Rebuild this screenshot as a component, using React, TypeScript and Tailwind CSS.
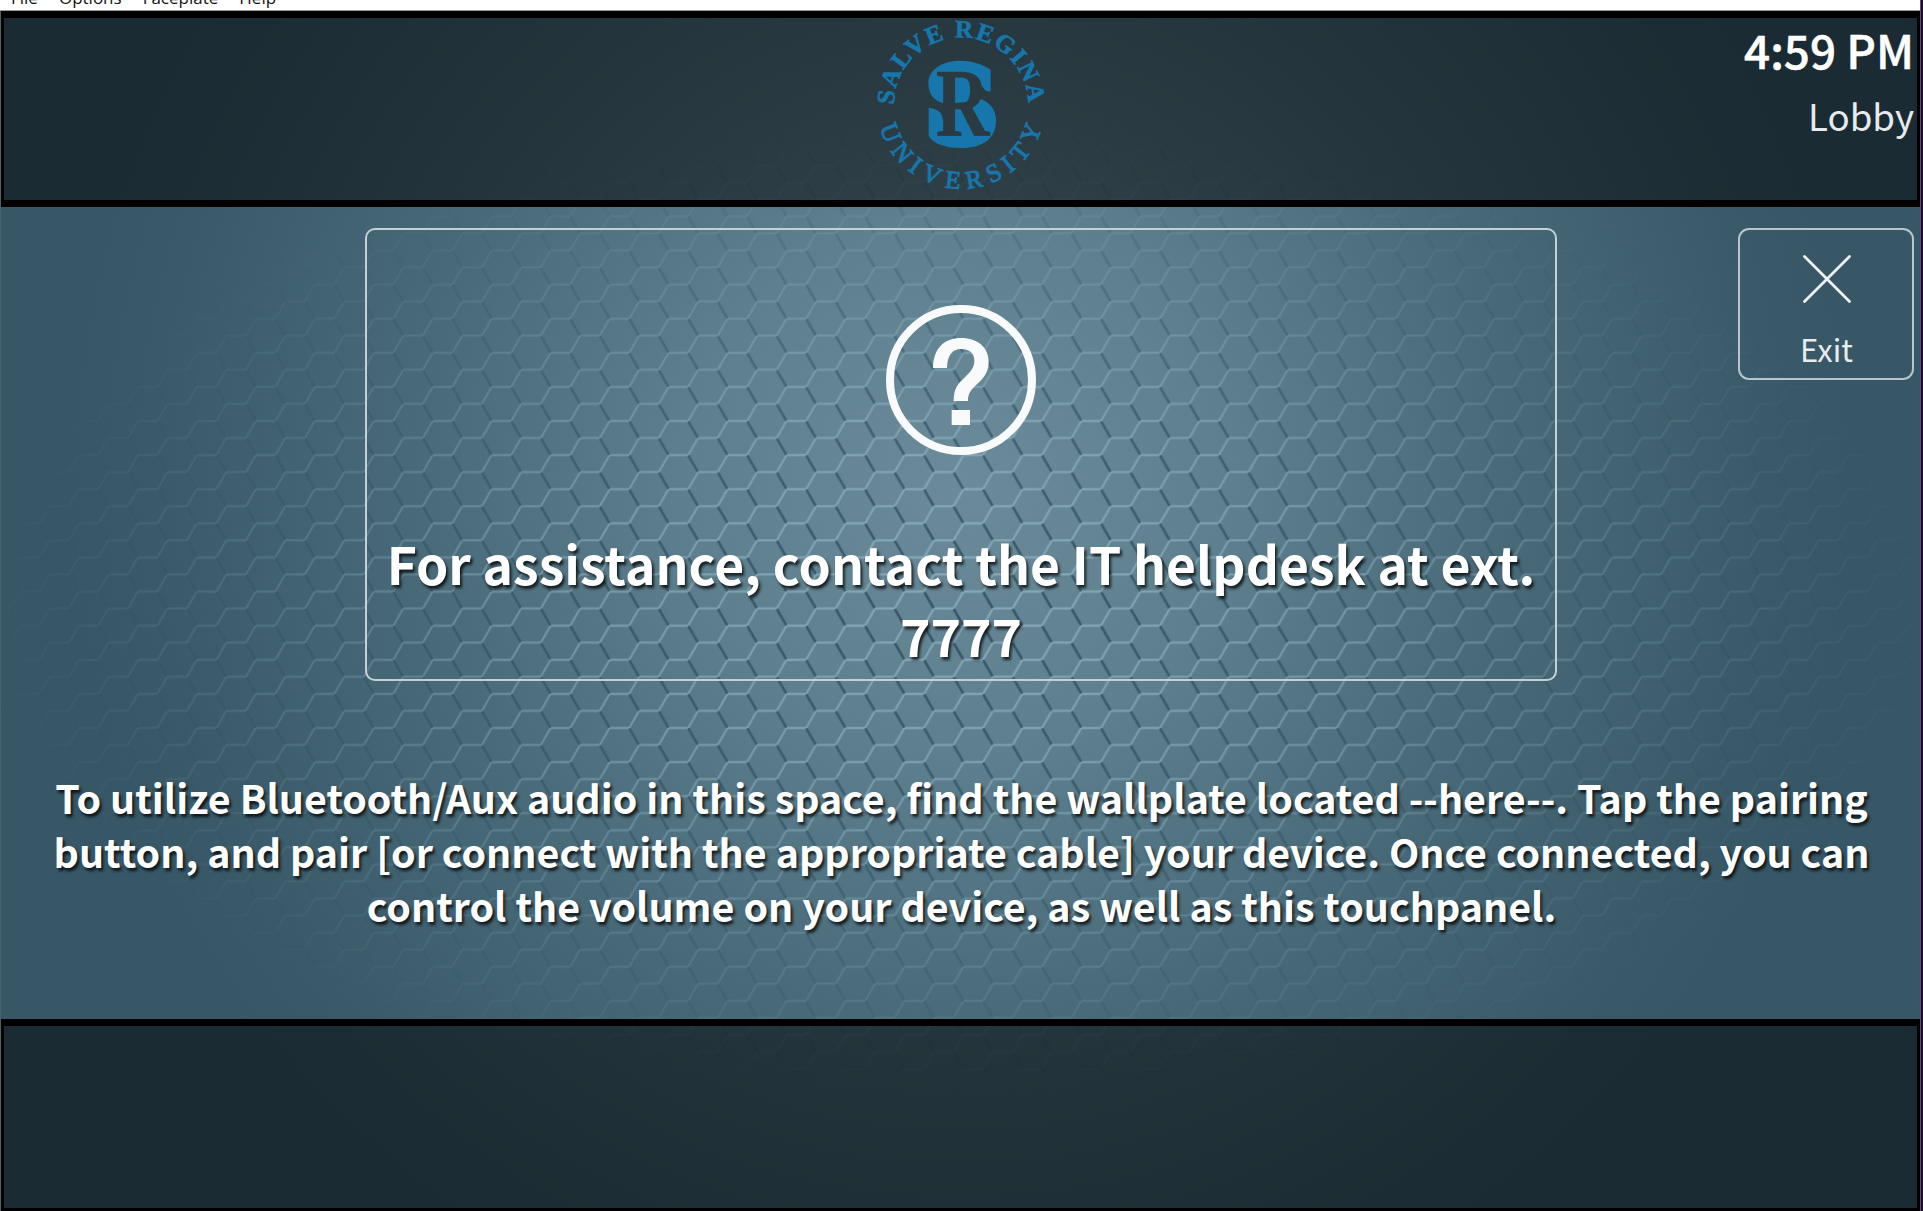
const MENU = ['File', 'Options', 'Faceplate', 'Help'];

function HexBackground() {
  return (
    <svg className="absolute inset-0 h-full w-full" viewBox="0 0 1920 1200" preserveAspectRatio="none" aria-hidden="true">
      <defs>
        <radialGradient id="glow" gradientUnits="userSpaceOnUse" cx="960" cy="470" r="900">
          <stop offset="0" stopColor="#6c8b9a" />
          <stop offset="0.3" stopColor="#5d7f8e" />
          <stop offset="0.6" stopColor="#496a79" />
          <stop offset="0.9" stopColor="#3a5a69" />
          <stop offset="1" stopColor="#375767" />
        </radialGradient>
        <radialGradient id="fade" gradientUnits="userSpaceOnUse" cx="0" cy="0" r="1" gradientTransform="translate(960 600) scale(980 500)">
          <stop offset="0" stopColor="#fff" />
          <stop offset="0.4" stopColor="#fff" stopOpacity="0.75" />
          <stop offset="0.7" stopColor="#fff" stopOpacity="0.32" />
          <stop offset="1" stopColor="#fff" stopOpacity="0" />
        </radialGradient>
        <pattern id="hex" patternUnits="userSpaceOnUse" x="58.2" y="0.7" width="59" height="34.11">
          <g fill="none">
            <path stroke="#2b4c5e" strokeOpacity="0.85" strokeWidth="2.5" d="M39.3 0L49.17 17.05M9.83 17.05L19.7 34.11" />
            <path
              stroke="#9fc3d2"
              strokeOpacity="0.58"
              strokeWidth="2.2"
              d="M19.7 0H39.3M19.7 34.11H39.3M0 17.05H9.83M49.17 17.05H59M19.7 0L9.83 17.05M49.17 17.05L39.3 34.11"
            />
          </g>
        </pattern>
        <mask id="fadeMask" maskUnits="userSpaceOnUse" x="0" y="0" width="1920" height="1200">
          <rect width="1920" height="1200" fill="url(#fade)" />
        </mask>
      </defs>
      <rect width="1920" height="1200" fill="url(#glow)" />
      <rect width="1920" height="1200" fill="url(#hex)" mask="url(#fadeMask)" />
    </svg>
  );
}

function UniversityLogo() {
  return (
    <svg className="h-[180px] w-[176px]" viewBox="71 57 528 540" fill="#1776ab" role="img" aria-label="Salve Regina University">
      <defs>
        <path id="arcTop" d="M134 317A201 201 0 0 1 536 317" />
        <path id="arcBottom" d="M92 384A252 252 0 0 0 578 384" />
      </defs>
      <text className="font-['Liberation_Serif'] font-bold" fontSize="75" stroke="#1776ab" strokeWidth="2">
        <textPath href="#arcTop" textLength="626">SALVE REGINA</textPath>
      </text>
      <text className="font-['Liberation_Serif']" fontSize="76" stroke="#1776ab" strokeWidth="3">
        <textPath href="#arcBottom" textLength="655">UNIVERSITY</textPath>
      </text>
      <path d="M424 212C395 193 365 185 333 185C275 185 237 215 237 252C237 285 252 303 280 312L320 312L360 308L400 262C404 274 412 278 424 278Z" />
      <path d="M238 326C262 328 280 340 280 362L320 325L355 318C370 315 385 310 395 300C425 312 440 335 440 365C440 415 405 447 335 447C285 447 250 432 238 410Z" />
      <text
        className="font-['Liberation_Serif'] font-bold"
        x="260"
        y="410"
        fontSize="290"
        textLength="160"
        lengthAdjust="spacingAndGlyphs"
        fill="#2b3a41"
        stroke="#2b3a41"
        strokeWidth="2"
      >
        R
      </text>
    </svg>
  );
}

function QuestionIcon() {
  return (
    <svg className="h-[150px] w-[150px]" viewBox="80 75 450 450" fill="#f9fafc" aria-hidden="true">
      <circle cx="305" cy="300" r="213" fill="none" stroke="#f9fafc" strokeWidth="24" />
      <path d="M221 264C222 205 255 174 305 174C355 174 388 203 388 245C388 285 365 300 345 320C330 335 326 345 326 363L283 363C283 325 295 312 318 290C335 274 345 262 345 242C345 220 330 207 305 207C280 207 264 225 263 264Z" />
      <rect x="277" y="390" width="55" height="45" />
    </svg>
  );
}

export default function App() {
  return (
    <div className="flex h-[1211px] w-[1923px] overflow-hidden bg-[#17131a] font-['Noto_Sans_CJK_SC',sans-serif] text-white">
      <div className="flex w-[1920px] shrink-0 flex-col">
        <nav className="flex h-[11px] shrink-0 items-end gap-[21px] overflow-hidden border-b border-[#9b9b9b] bg-white pb-px pl-[11px] font-['Open_Sans',sans-serif] text-[17px] leading-[22px] text-[#111]">
          {MENU.map((item) => (
            <span key={item}>{item}</span>
          ))}
        </nav>
        <div className="relative flex h-[1200px] flex-col border-l border-[#4a626e]">
          <HexBackground />
          <header className="relative grid h-[196px] shrink-0 grid-cols-[1fr_176px_1fr] border-t-7 border-r-3 border-b-7 border-l-3 border-black bg-black/50">
            <div />
            <UniversityLogo />
            <div className="flex flex-col items-end pr-[3px]">
              <div className="mt-px text-[45.8px] leading-[60px] font-medium [-webkit-text-stroke:0.5px_white]">4:59 PM</div>
              <div className="mt-[11px] text-[36.7px] leading-[50px] text-[#e8ebec]">Lobby</div>
            </div>
          </header>
          <main className="relative flex h-[812px] shrink-0 flex-col pt-[21px]">
            <div className="grid grid-cols-[364px_1192px_181px_176px] items-start">
              <div />
              <section className="flex h-[453px] flex-col items-center rounded-[10px] border-[2.5px] border-[#c5d0d5] pt-[75px]">
                <QuestionIcon />
                <p className="mt-[72px] text-center text-[51.7px] leading-[72px] font-bold whitespace-nowrap [text-shadow:2px_3px_3px_rgba(0,0,0,0.75)]">
                  For assistance, contact the IT helpdesk at ext.
                  <br />
                  7777
                </p>
              </section>
              <div />
              <button className="flex h-[152px] flex-col items-center rounded-[11px] border-2 border-[#b9c5cb] pt-[25px] pl-px">
                <svg className="h-12 w-12" viewBox="0 0 48 48" fill="none" stroke="#eef2f4" strokeWidth="2.8" strokeLinecap="round" aria-hidden="true">
                  <path d="M1.5 1.5L46.5 46.5M46.5 1.5L1.5 46.5" />
                </svg>
                <span className="mt-[24px] text-[31px] leading-[44px] text-[#e8ecee]">Exit</span>
              </button>
            </div>
            <p className="mt-[89px] pl-[2px] text-center text-[39.4px] leading-[54px] font-bold whitespace-nowrap [text-shadow:2px_3px_3px_rgba(0,0,0,0.75)]">
              To utilize Bluetooth/Aux audio in this space, find the wallplate located --here--. Tap the pairing
              <br />
              button, and pair [or connect with the appropriate cable] your device. Once connected, you can
              <br />
              control the volume on your device, as well as this touchpanel.
            </p>
          </main>
          <footer className="relative h-[192px] shrink-0 border-t-7 border-r-3 border-b-3 border-l-3 border-black bg-black/50" />
        </div>
      </div>
      <div className="w-px bg-[#6b3fa0]" />
    </div>
  );
}
